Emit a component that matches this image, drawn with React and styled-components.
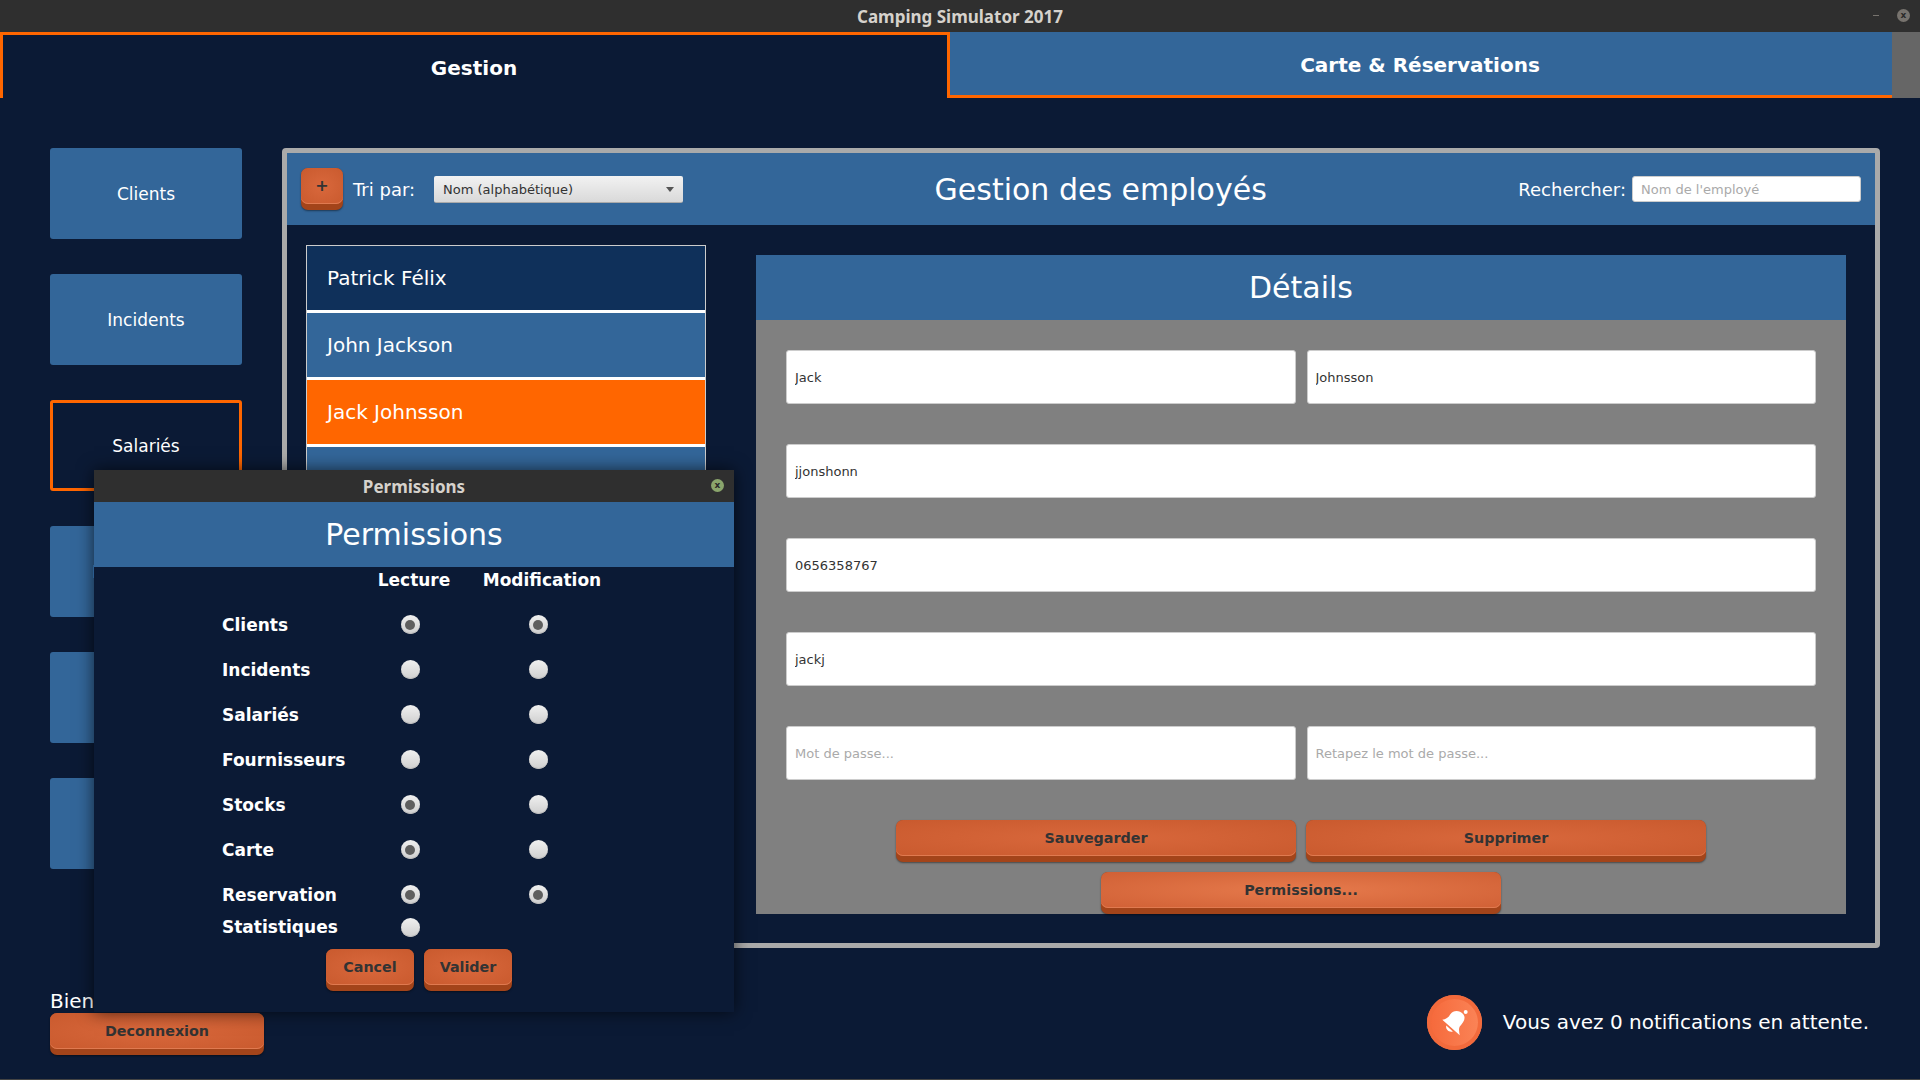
import React from 'react'
import styled, { createGlobalStyle, css } from 'styled-components'

const GlobalStyle = createGlobalStyle`
    html, body {
        margin: 0;
        padding: 0;
        overflow: hidden;
        background: #0b1a35;
    }
    * {
        box-sizing: border-box;
    }
`

const FONT = `"DejaVu Sans", Verdana, sans-serif`
const TITLE_FONT = `"Noto Sans", "Open Sans", sans-serif`

const Frame = styled.div`
    position: relative;
    width: 1920px;
    height: 1080px;
    display: flex;
    flex-direction: column;
    background: #0b1a35;
    border-bottom: 1px solid #444;
    font-family: ${FONT};
    color: #fff;
    overflow: hidden;
`

const TitleBar = styled.div`
    flex: none;
    height: 32px;
    display: flex;
    align-items: center;
    justify-content: center;
    position: relative;
    background: #2f2f2f;
    font-family: ${TITLE_FONT};
    font-size: 17px;
    font-weight: 700;
    color: #d6d2cc;
`

const WindowControls = styled.div`
    position: absolute;
    right: 10px;
    top: 9px;
    display: flex;
    align-items: center;
    gap: 18px;
`

const Minimize = styled.span`
    width: 6px;
    height: 1px;
    background: #77736e;
`

const CloseDot = styled.span`
    width: 13px;
    height: 13px;
    border-radius: 50%;
    display: flex;
    align-items: center;
    justify-content: center;
    background: ${(p) => (p.$active ? '#8aa56c' : '#77736e')};
    color: #2a2a2a;
    font-family: ${FONT};
    font-size: 9px;
    font-weight: 700;
    line-height: 1;
`

const Tabs = styled.div`
    flex: none;
    height: 66px;
    display: flex;
`

const Tab = styled.div`
    display: flex;
    align-items: center;
    justify-content: center;
    font-size: 20px;
    font-weight: 700;
    ${(p) =>
        p.$active
            ? css`
                  width: 950px;
                  border: 3px solid #ff6600;
                  border-bottom: none;
                  padding: 2px 2px 0 0;
              `
            : css`
                  width: 942px;
                  padding: 2px 2px 0 0;
                  background: #336699;
                  border-bottom: 3px solid #ff6600;
              `}
`

const TabFiller = styled.div`
    flex: 1;
    background: #666;
`

const Main = styled.div`
    flex: none;
    height: 850px;
    padding: 50px 40px 0 50px;
    display: flex;
    gap: 40px;
`

const Sidebar = styled.nav`
    width: 192px;
    display: flex;
    flex-direction: column;
    gap: 35px;
`

const SideButton = styled.div`
    height: 91px;
    display: flex;
    align-items: center;
    justify-content: center;
    border-radius: 3px;
    font-size: 17px;
    background: ${(p) => (p.$active ? 'transparent' : '#336699')};
    border: ${(p) => (p.$active ? '3px solid #ff6600' : 'none')};
`

const Panel = styled.section`
    width: 1598px;
    height: 800px;
    border: 5px solid #aaa;
    border-radius: 4px;
    display: flex;
    flex-direction: column;
`

const PanelHeader = styled.header`
    flex: none;
    height: 72px;
    padding: 0 14px;
    display: flex;
    align-items: center;
    justify-content: space-between;
    background: #336699;
`

const HeaderGroup = styled.div`
    display: flex;
    align-items: center;
`

const PanelTitle = styled.h1`
    margin: 0;
    font-size: 30px;
    font-weight: 400;
`

const SortLabel = styled.span`
    margin: 0 19px 0 10px;
    font-size: 18px;
`

const SearchLabel = styled.span`
    margin-right: 6px;
    font-size: 18px;
`

const Select = styled.div`
    width: 249px;
    height: 27px;
    margin-top: 1px;
    padding: 0 9px;
    display: flex;
    align-items: center;
    justify-content: space-between;
    border-radius: 2px;
    border-bottom: 1px solid #aaa;
    background: linear-gradient(#f2f2f2, #d9d9d9);
    color: #333;
    font-size: 13px;
`

const Caret = styled.span`
    width: 0;
    height: 0;
    border-left: 4px solid transparent;
    border-right: 4px solid transparent;
    border-top: 5px solid #555;
`

const Field = styled.input`
    display: block;
    height: ${(p) => (p.$small ? '26px' : '54px')};
    width: ${(p) => (p.$small ? '229px' : 'auto')};
    flex: ${(p) => (p.$small ? 'none' : '1')};
    min-width: 0;
    padding: 0 8px;
    border: 1px solid #ccc;
    border-radius: 3px;
    background: #fff;
    color: #333;
    font-family: ${FONT};
    font-size: 13px;
    outline: none;
    &::placeholder {
        color: #aaa;
        opacity: 1;
    }
`

const PanelBody = styled.div`
    flex: 1;
    min-height: 0;
    padding: 20px 29px 0 19px;
    display: flex;
    gap: 50px;
`

const EmployeeList = styled.ul`
    width: 400px;
    margin: 0;
    padding: 0;
    list-style: none;
    flex: none;
    border: 1px solid #ccc;
    border-bottom: none;
    align-self: flex-start;
`

const EmployeeItem = styled.li`
    height: 67px;
    padding: 0 20px;
    display: flex;
    align-items: center;
    border-bottom: 3px solid #fff;
    font-size: 20px;
    background: ${(p) => (p.$selected ? '#ff6600' : p.$current ? '#0f305a' : '#336699')};
`

const Details = styled.div`
    flex: 1;
    height: 659px;
    margin-top: 10px;
    display: flex;
    flex-direction: column;
    background: #808080;
`

const DetailsTitle = styled.h2`
    flex: none;
    height: 65px;
    margin: 0;
    display: flex;
    align-items: center;
    justify-content: center;
    background: #336699;
    font-size: 30px;
    font-weight: 400;
`

const Form = styled.div`
    flex: 1;
    padding: 30px 30px 0;
    display: flex;
    flex-direction: column;
    gap: 40px;
`

const FieldRow = styled.div`
    display: flex;
    gap: 11px;
`

const Actions = styled.div`
    display: flex;
    flex-direction: column;
    align-items: center;
    gap: 10px;
`

const ActionRow = styled.div`
    display: flex;
    gap: 10px;
`

const OrangeButton = styled.button`
    position: relative;
    isolation: isolate;
    flex: none;
    width: ${(p) => p.$width || 88}px;
    height: 42px;
    padding: 0 0 7px;
    border: none;
    border-radius: 7px;
    background: #a3441a;
    box-shadow: 0 1px 2px rgba(0, 0, 0, 0.45);
    color: #333;
    font-family: ${FONT};
    font-size: 14.3px;
    font-weight: 700;
    cursor: pointer;
    &::before {
        content: '';
        position: absolute;
        inset: 0 0 6px 0;
        z-index: -1;
        border-radius: 7px;
        background: ${(p) =>
            p.$hover
                ? 'radial-gradient(ellipse at center, #e67a4c 0%, #d06035 100%)'
                : 'radial-gradient(ellipse at center, #d9683c 0%, #c95a2e 100%)'};
        box-shadow: inset 0 -1px 0 #e07a50;
    }
`

const PlusButton = styled(OrangeButton)`
    width: 42px;
    font-size: 16px;
`

const Footer = styled.footer`
    flex: 1;
    display: flex;
    justify-content: space-between;
    padding: 41px 51px 0 50px;
`

const Welcome = styled.div`
    font-size: 20px;
    line-height: 24px;
`

const Notifications = styled.div`
    margin-top: 6px;
    height: 55px;
    display: flex;
    align-items: center;
    gap: 21px;
    font-size: 20px;
`

const NotificationText = styled.span`
    margin-bottom: 2px;
`

const BellBadge = styled.div`
    width: 55px;
    height: 55px;
    border-radius: 50%;
    display: flex;
    align-items: center;
    justify-content: center;
    background: linear-gradient(90deg, #f5683a, #fb8558);
    box-shadow: inset 0 0 0 4px #f26a3c;
`

const BellIcon = () => (
    <svg width="28" height="28" viewBox="118 85 85 85" fill="#fff">
        <path d="M125 118 C140 115 145 108 150 100 C158 88 178 88 188 100 C198 112 190 125 178 138 C174 145 176 155 178 165 Z" />
        <circle cx="196" cy="94" r="6" />
        <path d="M137 135 C134 147 146 157 157 153 Z" />
    </svg>
)

const Modal = styled.div`
    position: absolute;
    left: 94px;
    top: 470px;
    width: 640px;
    height: 542px;
    display: flex;
    flex-direction: column;
    background: #0b1a35;
    box-shadow: 0 0 16px rgba(0, 0, 0, 0.65);
`

const ModalClose = styled.div`
    position: absolute;
    right: 10px;
    top: 9px;
`

const ModalTitle = styled.h2`
    flex: none;
    height: 65px;
    margin: 0;
    display: flex;
    align-items: center;
    justify-content: center;
    background: #336699;
    font-size: 30px;
    font-weight: 400;
`

const PermissionGrid = styled.div`
    padding-left: 128px;
    display: grid;
    grid-template-columns: 124px 128px 128px;
    align-items: center;
    font-size: 17px;
    font-weight: 700;
`

const ColumnHead = styled.div`
    height: 26px;
    margin-bottom: 9px;
    display: flex;
    align-items: center;
    justify-content: center;
    white-space: nowrap;
    padding-left: ${(p) => p.$shift || 0}px;
`

const RowLabel = styled.div`
    height: ${(p) => (p.$short ? '20px' : '45px')};
    display: flex;
    align-items: center;
    white-space: nowrap;
`

const RadioCell = styled.div`
    height: ${(p) => (p.$short ? '20px' : '45px')};
    display: flex;
    align-items: center;
    justify-content: center;
`

const Radio = styled.span`
    flex: none;
    width: 19px;
    height: 19px;
    border-radius: 50%;
    display: flex;
    align-items: center;
    justify-content: center;
    background: linear-gradient(#f0f0f0, #cfcfcf);
    box-shadow: inset 0 -1px 0 #bbb;
    &::after {
        content: '';
        display: ${(p) => (p.$checked ? 'block' : 'none')};
        width: 10px;
        height: 10px;
        border-radius: 50%;
        background: #5f5f5f;
    }
`

const ModalActions = styled.div`
    margin-top: 12px;
    padding-left: 10px;
    display: flex;
    justify-content: center;
    gap: 10px;
`

const employees = ['Patrick Félix', 'John Jackson', 'Jack Johnsson', '']
const sections = ['Clients', 'Incidents', 'Salariés', 'Fournisseurs', 'Stocks', 'Carte']
const permissions = [
    { name: 'Clients', read: true, write: true },
    { name: 'Incidents' },
    { name: 'Salariés' },
    { name: 'Fournisseurs' },
    { name: 'Stocks', read: true },
    { name: 'Carte', read: true },
    { name: 'Reservation', read: true, write: true },
]

const App = () => {
    return (
        <Frame>
            <GlobalStyle />
            <TitleBar>
                Camping Simulator 2017
                <WindowControls>
                    <Minimize />
                    <CloseDot>x</CloseDot>
                </WindowControls>
            </TitleBar>

            <Tabs>
                <Tab $active>Gestion</Tab>
                <Tab>Carte &amp; Réservations</Tab>
                <TabFiller />
            </Tabs>

            <Main>
                <Sidebar>
                    {sections.map((name) => (
                        <SideButton key={name} $active={name === 'Salariés'}>
                            {name}
                        </SideButton>
                    ))}
                </Sidebar>

                <Panel>
                    <PanelHeader>
                        <HeaderGroup>
                            <PlusButton>+</PlusButton>
                            <SortLabel>Tri par:</SortLabel>
                            <Select>
                                Nom (alphabétique)
                                <Caret />
                            </Select>
                        </HeaderGroup>
                        <PanelTitle>Gestion des employés</PanelTitle>
                        <HeaderGroup>
                            <SearchLabel>Rechercher:</SearchLabel>
                            <Field $small placeholder="Nom de l'employé" />
                        </HeaderGroup>
                    </PanelHeader>

                    <PanelBody>
                        <EmployeeList>
                            {employees.map((name, i) => (
                                <EmployeeItem key={i} $current={i === 0} $selected={i === 2}>
                                    {name}
                                </EmployeeItem>
                            ))}
                        </EmployeeList>

                        <Details>
                            <DetailsTitle>Détails</DetailsTitle>
                            <Form>
                                <FieldRow>
                                    <Field defaultValue="Jack" />
                                    <Field defaultValue="Johnsson" />
                                </FieldRow>
                                <FieldRow>
                                    <Field defaultValue="jjonshonn" />
                                </FieldRow>
                                <FieldRow>
                                    <Field defaultValue="0656358767" />
                                </FieldRow>
                                <FieldRow>
                                    <Field defaultValue="jackj" />
                                </FieldRow>
                                <FieldRow>
                                    <Field placeholder="Mot de passe..." />
                                    <Field placeholder="Retapez le mot de passe..." />
                                </FieldRow>
                                <Actions>
                                    <ActionRow>
                                        <OrangeButton $width={400}>Sauvegarder</OrangeButton>
                                        <OrangeButton $width={400}>Supprimer</OrangeButton>
                                    </ActionRow>
                                    <OrangeButton $width={400} $hover>
                                        Permissions...
                                    </OrangeButton>
                                </Actions>
                            </Form>
                        </Details>
                    </PanelBody>
                </Panel>
            </Main>

            <Footer>
                <div>
                    <Welcome>Bienvenue</Welcome>
                    <OrangeButton $width={214}>Deconnexion</OrangeButton>
                </div>
                <Notifications>
                    <BellBadge>
                        <BellIcon />
                    </BellBadge>
                    <NotificationText>Vous avez 0 notifications en attente.</NotificationText>
                </Notifications>
            </Footer>

            <Modal>
                <TitleBar>
                    Permissions
                    <ModalClose>
                        <CloseDot $active>x</CloseDot>
                    </ModalClose>
                </TitleBar>
                <ModalTitle>Permissions</ModalTitle>
                <PermissionGrid>
                    <span />
                    <ColumnHead $shift={8}>Lecture</ColumnHead>
                    <ColumnHead $shift={8}>Modification</ColumnHead>
                    {permissions.map((row) => (
                        <React.Fragment key={row.name}>
                            <RowLabel>{row.name}</RowLabel>
                            <RadioCell>
                                <Radio $checked={row.read} />
                            </RadioCell>
                            <RadioCell>
                                <Radio $checked={row.write} />
                            </RadioCell>
                        </React.Fragment>
                    ))}
                    <RowLabel $short>Statistiques</RowLabel>
                    <RadioCell $short>
                        <Radio />
                    </RadioCell>
                </PermissionGrid>
                <ModalActions>
                    <OrangeButton>Cancel</OrangeButton>
                    <OrangeButton>Valider</OrangeButton>
                </ModalActions>
            </Modal>
        </Frame>
    )
}

export default App
